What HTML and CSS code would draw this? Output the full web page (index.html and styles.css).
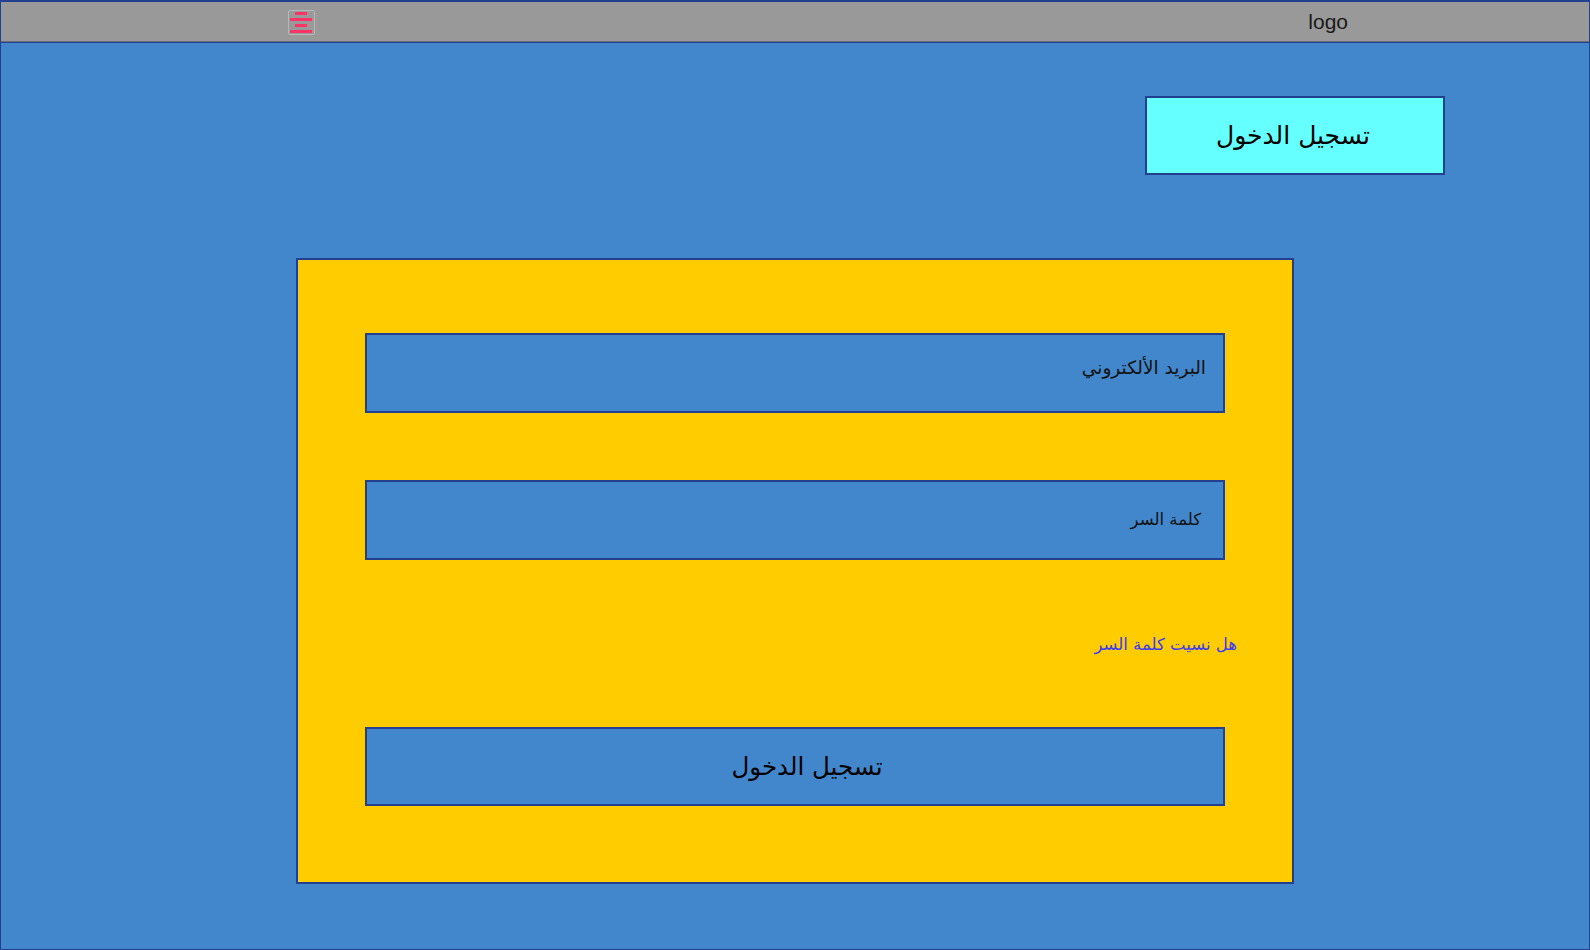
FILE: index.html
```html
<!DOCTYPE html>
<html lang="ar">
<head>
<meta charset="utf-8">
<title>تسجيل الدخول</title>
<link rel="stylesheet" href="styles.css">
</head>
<body>
<div class="page">
  <header class="topbar">
    <button class="menu-btn" aria-label="menu">
      <svg width="25" height="23" viewBox="0 0 25 23">
        <rect x="6" y="1" width="12" height="3" fill="#ff3366"/>
        <rect x="1" y="7" width="22" height="3" fill="#ff3366"/>
        <rect x="6" y="13" width="12" height="3" fill="#ff3366"/>
        <rect x="1" y="19" width="22" height="3" fill="#ff3366"/>
      </svg>
    </button>
    <div class="logo">logo</div>
  </header>
  <main class="main">
    <div class="top-row">
      <button class="top-login">تسجيل الدخول</button>
    </div>
    <form class="card" dir="rtl">
      <div class="field field-email">البريد الألكتروني</div>
      <div class="field field-pass">كلمة السر</div>
      <a class="forgot" href="#">هل نسيت كلمة السر</a>
      <button type="button" class="submit">تسجيل الدخول</button>
    </form>
  </main>
</div>
</body>
</html>
```

FILE: styles.css
```css
html, body {
  margin: 0;
  padding: 0;
}
body {
  font-family: "Liberation Sans", "DejaVu Sans", "Noto Sans", sans-serif;
  background: #4287cc;
}
.page {
  width: 1590px;
  height: 950px;
  box-sizing: border-box;
  border: 1px solid #22408f;
  background: #4287cc;
  display: flex;
  flex-direction: column;
}
.topbar {
  height: 39px;
  background: #999999;
  border-top: 1px solid #22408f;
  border-bottom: 1px solid #6f6f78;
  box-shadow: 0 1px 0 #22408f;
  display: flex;
  align-items: center;
  justify-content: space-between;
  padding: 0 241px 0 287px;
  flex-shrink: 0;
}
.menu-btn {
  width: 27px;
  height: 25px;
  box-sizing: border-box;
  padding: 0;
  margin-top: 2px;
  border: 1px solid #b8b8b8;
  border-radius: 2px;
  background: transparent;
  display: flex;
  align-items: center;
  justify-content: center;
}
.menu-btn svg { display: block; }
.logo {
  font-family: "Liberation Sans", Arial, sans-serif;
  font-size: 21px;
  color: #1a1a1a;
  margin-top: 1px;
}
.main {
  flex: 1;
  display: flex;
  flex-direction: column;
  padding-top: 54px;
}
.top-row {
  display: flex;
  justify-content: flex-end;
  padding-right: 144px;
}
.top-login {
  width: 300px;
  height: 79px;
  box-sizing: border-box;
  background: #66ffff;
  border: 2px solid #22408f;
  font-family: "DejaVu Sans", sans-serif;
  font-size: 25px;
  color: #000;
  padding: 0 4px 0 0;
}
.card {
  margin: 83px 0 0 295px;
  width: 998px;
  height: 626px;
  box-sizing: border-box;
  background: #ffcc00;
  border: 2px solid #22408f;
  padding: 73px 67px 0 67px;
  display: flex;
  flex-direction: column;
}
.field {
  height: 80px;
  box-sizing: border-box;
  background: #4287cc;
  border: 2px solid #22408f;
  display: flex;
  align-items: center;
  font-family: "DejaVu Sans", sans-serif;
  color: #111;
}
.field-email { padding-right: 17px; padding-bottom: 11px; font-size: 18.5px; }
.field-pass { margin-top: 67px; padding-right: 22px; padding-bottom: 2px; font-size: 16.5px; }
.forgot {
  align-self: flex-start;
  margin: 75px -12px 0 0;
  font-family: "DejaVu Sans", sans-serif;
  font-size: 16.5px;
  color: #3b3bf2;
  text-decoration: none;
}
.submit {
  margin-top: 73px;
  height: 79px;
  box-sizing: border-box;
  background: #4287cc;
  border: 2px solid #22408f;
  font-family: "DejaVu Sans", sans-serif;
  font-size: 24.5px;
  color: #000;
  padding: 0 0 0 24px;
}
```
